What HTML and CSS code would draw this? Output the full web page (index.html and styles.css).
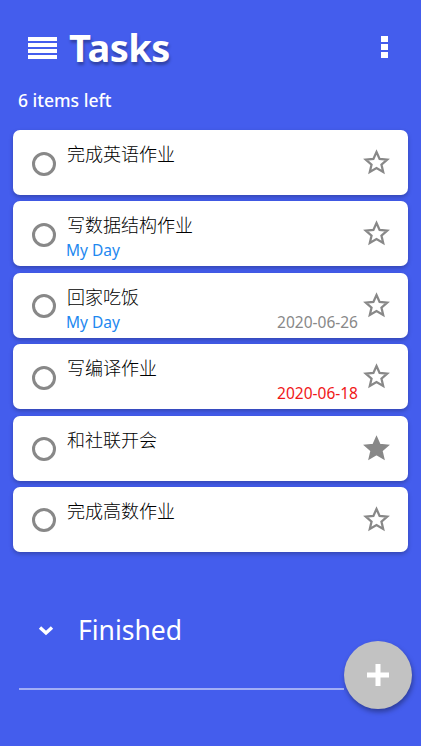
FILE: index.html
```html
<!DOCTYPE html>
<html lang="en">
<head>
    <meta charset="UTF-8">
    <meta name="viewport" content="width=device-width, initial-scale=1.0">
    <title>Tasks</title>
    <link rel="stylesheet" href="styles.css">
</head>
<body>
    <div id="app">
        <header class="top-bar">
            <svg class="menu-icon" width="29" height="22" viewBox="0 0 29 22">
                <rect x="0" y="0" width="29" height="4" fill="#fff"/>
                <rect x="0" y="6" width="29" height="4" fill="#fff"/>
                <rect x="0" y="12" width="29" height="4" fill="#fff"/>
                <rect x="0" y="18" width="29" height="4" fill="#fff"/>
            </svg>
            <h1 class="title">Tasks</h1>
            <svg class="more-icon" width="7" height="22" viewBox="0 0 7 22">
                <rect x="0" y="0" width="7" height="6" fill="#fff"/>
                <rect x="0" y="8" width="7" height="6" fill="#fff"/>
                <rect x="0" y="16" width="7" height="6" fill="#fff"/>
            </svg>
        </header>

        <div class="count">6 items left</div>

        <ul class="todo-list">
            <li class="todo-item">
                <span class="check"></span>
                <div class="todo-body">
                    <div class="todo-title">完成英语作业</div>
                </div>
                <svg class="star" width="27" height="27" viewBox="0 0 24 24"><path d="M12 2.6l2.75 6.2 6.75.6-5.1 4.45 1.55 6.65L12 17 6.05 20.5l1.55-6.650-5.1-4.45 6.75-.6z" fill="none" stroke="#888" stroke-width="2"/></svg>
            </li>
            <li class="todo-item">
                <span class="check"></span>
                <div class="todo-body">
                    <div class="todo-title">写数据结构作业</div>
                    <div class="todo-meta"><span class="my-day">My Day</span></div>
                </div>
                <svg class="star" width="27" height="27" viewBox="0 0 24 24"><path d="M12 2.6l2.75 6.2 6.75.6-5.1 4.45 1.55 6.65L12 17 6.05 20.5l1.55-6.65-5.1-4.45 6.75-.6z" fill="none" stroke="#888" stroke-width="2"/></svg>
            </li>
            <li class="todo-item">
                <span class="check"></span>
                <div class="todo-body">
                    <div class="todo-title">回家吃饭</div>
                    <div class="todo-meta"><span class="my-day">My Day</span><span class="due">2020-06-26</span></div>
                </div>
                <svg class="star" width="27" height="27" viewBox="0 0 24 24"><path d="M12 2.6l2.75 6.2 6.75.6-5.1 4.45 1.55 6.65L12 17 6.05 20.5l1.55-6.65-5.1-4.45 6.75-.6z" fill="none" stroke="#888" stroke-width="2"/></svg>
            </li>
            <li class="todo-item">
                <span class="check"></span>
                <div class="todo-body">
                    <div class="todo-title">写编译作业</div>
                    <div class="todo-meta"><span></span><span class="due overdue">2020-06-18</span></div>
                </div>
                <svg class="star" width="27" height="27" viewBox="0 0 24 24"><path d="M12 2.6l2.75 6.2 6.75.6-5.1 4.45 1.55 6.65L12 17 6.05 20.5l1.55-6.65-5.1-4.45 6.75-.6z" fill="none" stroke="#888" stroke-width="2"/></svg>
            </li>
            <li class="todo-item">
                <span class="check"></span>
                <div class="todo-body">
                    <div class="todo-title">和社联开会</div>
                </div>
                <svg class="star" width="27" height="27" viewBox="0 0 24 24"><path d="M12 2.6l2.75 6.2 6.75.6-5.1 4.45 1.55 6.65L12 17 6.05 20.5l1.55-6.65-5.1-4.45 6.75-.6z" fill="#888" stroke="#888" stroke-width="2"/></svg>
            </li>
            <li class="todo-item">
                <span class="check"></span>
                <div class="todo-body">
                    <div class="todo-title">完成高数作业</div>
                </div>
                <svg class="star" width="27" height="27" viewBox="0 0 24 24"><path d="M12 2.6l2.75 6.2 6.75.6-5.1 4.45 1.55 6.65L12 17 6.05 20.5l1.55-6.65-5.1-4.45 6.75-.6z" fill="none" stroke="#888" stroke-width="2"/></svg>
            </li>
        </ul>

        <div class="finished">
            <svg class="chevron" width="16" height="11" viewBox="0 0 16 11">
                <path d="M2 2.5l6 5.5 6-5.5" fill="none" stroke="#fff" stroke-width="3.4"/>
            </svg>
            <span>Finished</span>
        </div>

        <div class="bottom">
            <div class="divider"></div>
            <button class="add-button">
                <svg width="22" height="22" viewBox="0 0 22 22">
                    <rect x="0" y="8.5" width="22" height="5" fill="#fff"/>
                    <rect x="8.5" y="0" width="5" height="22" fill="#fff"/>
                </svg>
            </button>
        </div>
    </div>
</body>
</html>
```

FILE: styles.css
```css
* {
    padding: 0;
    margin: 0;
    box-sizing: border-box;
}

body {
    font-family: "Noto Sans", "Noto Sans CJK SC", sans-serif;
    background-color: #445ded;
    color: #fff;
    height: 746px;
    overflow: hidden;
}

#app {
    padding: 0 13px;
}

.top-bar {
    display: flex;
    align-items: center;
    height: 46px;
    margin-top: 24px;
}

.menu-icon {
    margin-left: 15px;
    margin-top: 1px;
}

.title {
    margin-left: 12px;
    font-size: 38px;
    font-weight: 700;
    line-height: 46px;
    letter-spacing: -0.5px;
    text-shadow: 1px 3px 3px rgba(0, 0, 0, 0.3);
    flex: 1;
}

.more-icon {
    margin-right: 20px;
}

.count {
    margin-top: 18px;
    margin-left: 5px;
    font-size: 17.5px;
    font-weight: 500;
    line-height: 24px;
}

.todo-list {
    list-style: none;
    margin-top: 18px;
    display: flex;
    flex-direction: column;
    gap: 6.4px;
}

.todo-item {
    display: flex;
    align-items: center;
    height: 65px;
    padding: 0 18px 0 19px;
    background-color: #fff;
    border-radius: 7px;
    box-shadow: 0 2px 4px rgba(0, 0, 0, 0.25);
}

.check {
    width: 24px;
    height: 24px;
    border: 3.5px solid #888;
    border-radius: 50%;
    margin-top: 2px;
    flex-shrink: 0;
}

.todo-body {
    flex: 1;
    align-self: stretch;
    padding-top: 11px;
    margin-left: 11px;
    margin-right: 5px;
}

.todo-title {
    color: #000;
    font-size: 18px;
    font-weight: 300;
    line-height: 27px;
}

.todo-meta {
    display: flex;
    justify-content: space-between;
    margin-left: -1px;
    font-size: 15.5px;
    line-height: 22px;
}

.my-day {
    color: #1e88f0;
}

.due {
    color: #888;
}

.due.overdue {
    color: #f01818;
}

.star {
    flex-shrink: 0;
}

.finished {
    display: flex;
    align-items: center;
    margin-top: 60px;
    margin-left: 25px;
    font-size: 26.5px;
    line-height: 36px;
}

.chevron {
    margin-right: 24px;
    margin-top: 2px;
}

.bottom {
    position: relative;
    margin-top: 40px;
    height: 20px;
}

.divider {
    margin-left: 6px;
    margin-right: 64px;
    height: 2px;
    background-color: rgba(255, 255, 255, 0.5);
}

.add-button {
    position: absolute;
    right: -4px;
    top: -47px;
    width: 68px;
    height: 68px;
    border: none;
    border-radius: 50%;
    background-color: #c2c2c2;
    box-shadow: 1px 3px 5px rgba(0, 0, 0, 0.35);
    display: flex;
    align-items: center;
    justify-content: center;
}
```
